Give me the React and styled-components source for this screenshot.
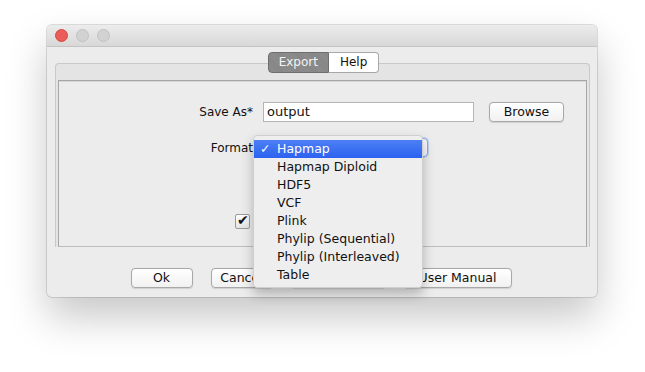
import React from 'react';
import styled, { createGlobalStyle } from 'styled-components';

const GlobalStyle = createGlobalStyle`
  html, body { margin: 0; padding: 0; background: #fff; }
  body { font-family: "DejaVu Sans", "Liberation Sans", sans-serif; font-size: 12.5px; color: #111; }
`;

const Page = styled.div`
  width: 645px;
  height: 372px;
  padding: 25px 0 0 47px;
  box-sizing: border-box;
`;

const Window = styled.div`
  width: 550px;
  height: 272px;
  border-radius: 5px;
  background: #ececec;
  box-shadow: 0 0 0 1px rgba(0,0,0,0.12), 0 20px 40px rgba(0,0,0,0.22);
  display: flex;
  flex-direction: column;
`;

const TitleBar = styled.div`
  height: 21px;
  border-radius: 5px 5px 0 0;
  background: linear-gradient(#ececec, #d8d8d8);
  border-bottom: 1px solid #c4c4c4;
  display: flex;
  align-items: center;
  gap: 8px;
  padding-left: 8px;
`;

const Light = styled.span`
  width: 11px;
  height: 11px;
  border-radius: 50%;
  background: ${p => p.red ? '#ec5b57' : '#d2d2d2'};
  border: 0.5px solid ${p => p.red ? '#d24944' : '#c2c2c2'};
`;

const Body = styled.div`
  flex: 1;
  display: flex;
  flex-direction: column;
  padding: 6px 7px 0 8px;
`;

const TabPane = styled.div`
  position: relative;
  margin-top: 10px;
  border: 1px solid #c9c9c9;
  border-bottom: none;
  border-radius: 4px 4px 0 0;
  background: #e4e4e4;
  padding: 16px 2px 0 2px;
`;

const Tabs = styled.div`
  position: absolute;
  top: -12px;
  left: 0;
  right: 0;
  display: flex;
  justify-content: center;
  padding-left: 2px;
`;

const Tab = styled.div`
  height: 19px;
  line-height: 19px;
  padding: 0 ${p => p.active ? 10 : 11}px;
  border: 1px solid ${p => p.active ? '#6e6e6e' : '#a8a8a8'};
  border-left: ${p => p.active ? '1px solid #6e6e6e' : 'none'};
  background: ${p => p.active ? 'repeating-linear-gradient(45deg, #8d8d8d 0 1px, #858585 1px 2px)' : '#fff'};
  color: ${p => p.active ? '#f4f4f4' : '#111'};
  border-radius: ${p => p.active ? '4px 0 0 4px' : '0 4px 4px 0'};
  font-size: 12px;
`;

const Panel = styled.div`
  height: 167px;
  border: 1px solid #a6a6a6;
  border-bottom-color: #bdbdbd;
  background: #ececec;
  box-shadow: inset 0 1px 0 #d6d6d6;
  padding-top: 21px;
  box-sizing: border-box;
`;

const Form = styled.div`
  display: grid;
  grid-template-columns: 194px 211px auto;
  column-gap: 10px;
  row-gap: 16px;
  align-items: center;
`;

const Label = styled.div`
  text-align: right;
  font-size: 12px;
`;

const TextField = styled.div`
  height: 20px;
  border: 1px solid #b5b5b5;
  background: #fff;
  box-sizing: border-box;
  padding: 0 3px;
  line-height: 18px;
  font-size: 13px;
`;

const Button = styled.div`
  width: ${p => p.w}px;
  height: 20px;
  margin-left: ${p => p.shift || 0}px;
  box-sizing: border-box;
  border: 1px solid #a8a8a8;
  border-radius: 4px;
  background: linear-gradient(#ffffff, #f1f1f1);
  box-shadow: 0 0.5px 1px rgba(0,0,0,0.12);
  text-align: center;
  line-height: 18px;
  font-size: 12.5px;
`;

const Combo = styled.div`
  position: relative;
  width: 165px;
  height: 19px;
  border-radius: 4px;
  background: #f6f8fc;
  border: 1px solid #86aef2;
  box-shadow: 0 0 0 1px rgba(120,160,240,0.35);
  box-sizing: border-box;
`;

const Popup = styled.div`
  position: absolute;
  left: -11px;
  top: -4px;
  width: 168px;
  padding: 4px 0 3px;
  background: #eeeeee;
  border: 1px solid #cfcfcf;
  border-radius: 4px;
  box-shadow: 0 6px 12px rgba(0,0,0,0.25);
  z-index: 5;
`;

const Item = styled.div`
  height: 18px;
  line-height: 18px;
  padding-left: 23px;
  position: relative;
  font-size: 12.5px;
  color: ${p => p.selected ? '#fff' : '#111'};
  background: ${p => p.selected ? 'linear-gradient(#4d7ff4, #2c62f0)' : 'transparent'};
`;

const Check = styled.span`
  position: absolute;
  left: 6px;
  top: 0;
`;

const CheckRow = styled.div`
  grid-column: 1 / 3;
  padding-left: 176px;
  margin-top: 40px;
`;

const CheckBox = styled.span`
  display: inline-block;
  width: 13px;
  height: 13px;
  border: 1px solid #9a9a9a;
  border-radius: 2px;
  background: linear-gradient(#fff, #e4e4e4);
  position: relative;
  vertical-align: middle;
  &::after {
    content: '✔';
    position: absolute;
    left: 1px;
    top: -3px;
    font-size: 14px;
    color: #111;
  }
`;

const Footer = styled.div`
  display: flex;
  justify-content: center;
  gap: 18px;
  padding-top: 21px;
  margin-right: 3px;
`;

const formats = ['Hapmap', 'Hapmap Diploid', 'HDF5', 'VCF', 'Plink', 'Phylip (Sequential)', 'Phylip (Interleaved)', 'Table'];

export default function App() {
  return (
    <Page>
      <GlobalStyle />
      <Window>
        <TitleBar>
          <Light red />
          <Light />
          <Light />
        </TitleBar>
        <Body>
          <TabPane>
            <Tabs>
              <Tab active>Export</Tab>
              <Tab>Help</Tab>
            </Tabs>
            <Panel>
              <Form>
                <Label>Save As*</Label>
                <TextField>output</TextField>
                <Button w={75} shift={5}>Browse</Button>
                <Label>Format</Label>
                <Combo>
                  <Popup>
                    {formats.map((f, i) => (
                      <Item key={f} selected={i === 0}>
                        {i === 0 && <Check>✓</Check>}
                        {f}
                      </Item>
                    ))}
                  </Popup>
                </Combo>
                <div />
                <CheckRow>
                  <CheckBox />
                </CheckRow>
              </Form>
            </Panel>
          </TabPane>
          <Footer>
            <Button w={62}>Ok</Button>
            <Button w={62}>Cancel</Button>
            <Button w={95}>Filter</Button>
            <Button w={108}>User Manual</Button>
          </Footer>
        </Body>
      </Window>
    </Page>
  );
}
